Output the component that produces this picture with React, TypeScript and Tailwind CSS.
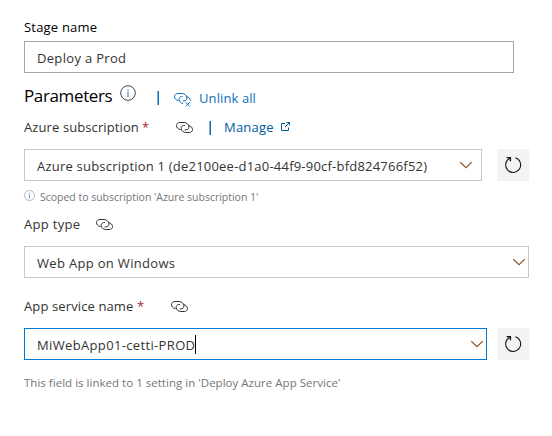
import React from 'react';

function LinkIcon({ className = '', unlink = false }: { className?: string; unlink?: boolean }) {
  return (
    <svg className={className} width="17" height="14" viewBox="0 0 17 14" fill="none" stroke="currentColor" strokeWidth="1">
      <path d="M4.6 7.5H4C2 7 .5 5.6 .5 3.6C.5 1.6 2 .5 4 .5H8C10.6 .5 13 2.6 13 5C13 6.9 11.6 7.9 9.8 7.9H8.6" />
      {unlink ? (
        <>
          <path d="M8.6 3.5H7.6C5.9 3.7 4.9 4.9 5.1 6.6C5.3 8.8 6.8 10.3 9 10.5M12.4 3.5C14.6 3.9 16.3 5.4 16.4 7.5" />
          <path d="M11.6 9.2L15.8 13.4M15.8 9.2L11.6 13.4" />
        </>
      ) : (
        <path d="M9 3.5H7.8C6 3.7 5 4.9 5.2 6.6C5.4 9 7.4 10.5 9.8 10.5H13.2C15.2 10.5 16.5 9.4 16.5 7.7C16.5 5.5 14.8 3.9 12.6 3.5" />
      )}
    </svg>
  );
}

function InfoIcon({ size, className = '' }: { size: number; className?: string }) {
  return (
    <svg className={className} width={size} height={size} viewBox="0 0 16 16" fill="none" stroke="currentColor">
      <circle cx="8" cy="8" r="7.3" />
      <path d="M8 6.8V12M8 4.2V5.4" stroke="#3f7fc0" strokeWidth="1.2" />
    </svg>
  );
}

function Chevron({ className = '' }: { className?: string }) {
  return (
    <svg className={className} width="13" height="8" viewBox="0 0 13 8" fill="none" stroke="currentColor" strokeWidth="1.2">
      <path d="M1.3 1.2L7 6.6L12.7 1.2" />
    </svg>
  );
}

function RefreshButton() {
  return (
    <button className="flex size-8 items-center justify-center bg-[#f3f3f3] text-[#15151f]">
      <svg width="18" height="18" viewBox="0 0 18 18" fill="none" stroke="currentColor" strokeWidth="1.1">
        <path d="M11.4 1.8A7.5 7.5 0 1 1 5.9 2.2" />
        <path d="M2.6 1.6H6.4V5.2" strokeWidth="1.4" />
      </svg>
    </button>
  );
}

export default function App() {
  return (
    <div className="h-[436px] w-[552px] bg-white pt-[17px] pl-6 font-['Open_Sans',sans-serif] text-[13px] leading-5 whitespace-nowrap text-[#333]">
      <div className="text-black"><span className="tracking-[0.2px]">Stage name</span></div>
      <div className="mt-1 flex h-8 w-[490px] items-center border border-[#a6a6a6] pt-0.5 pl-3">
        <span className="tracking-[0.32px]">Deploy a Prod</span>
      </div>

      <div className="mt-[9px] flex h-[27px] items-start">
        <h2 className="w-24 text-[17px] leading-[27px] text-black"><span className="tracking-[-0.37px]">Parameters</span></h2>
        <InfoIcon size={16} className="mt-[3px] text-[#444]" />
        <span className="mt-[9px] ml-[21px] h-[14px] w-0.5 bg-linear-to-r from-[#7fb0dd] from-50% to-[#106ebe] to-50%" />
        <LinkIcon unlink className="mt-[11px] ml-[15px] text-[#106ebe]" />
        <span className="mt-[6px] ml-2 tracking-[0.1px] text-[#106ebe]">Unlink all</span>
      </div>

      <div className="mt-2 flex h-5 items-start">
        <span className="w-[118px] tracking-[0.1px]">Azure subscription</span>
        <span className="w-[34px] text-[#a4262c]">*</span>
        <LinkIcon className="mt-[5px]" />
        <span className="mt-1 ml-4 h-[14px] w-0.5 bg-linear-to-r from-[#7fb0dd] from-50% to-[#106ebe] to-50%" />
        <span className="ml-[13px] w-[57px] tracking-[0.2px] text-[#005a9e]">Manage</span>
        <svg className="mt-[5px] text-[#005a9e]" width="10" height="10" viewBox="0 0 10 10" fill="none" stroke="currentColor">
          <path d="M4 1.5H.5V8.5H7.5V5.5M5.5 .5H8.5V3.5M8.5 .5L4 5" />
        </svg>
      </div>
      <div className="mt-3 flex gap-[15px]">
        <div className="flex h-8 w-[458px] items-center justify-between border border-[#c8c8c8] pr-[9px] pl-3">
          <span className="pt-0.5 tracking-[0.215px]">Azure subscription 1 (de2100ee-d1a0-44f9-90cf-bfd824766f52)</span>
          <Chevron className="text-[#8a5a32]" />
        </div>
        <RefreshButton />
      </div>
      <div className="mt-2 flex h-4 items-start text-[10.5px] leading-4 text-[#767676]">
        <InfoIcon size={11} className="mt-px mr-[5px] text-[#999]" />
        <span className="tracking-[-0.02px]">Scoped to subscription 'Azure subscription 1'</span>
      </div>

      <div className="mt-[9px] flex h-5 items-start">
        <span className="w-[72px] tracking-[0.3px]">App type</span>
        <LinkIcon className="mt-[5px]" />
      </div>
      <div className="mt-3 flex h-8 w-[505px] items-center justify-between border border-[#c8c8c8] pr-[3px] pl-3">
        <span className="pt-0.5 tracking-[0.32px]">Web App on Windows</span>
        <Chevron className="text-[#8a5a32]" />
      </div>

      <div className="mt-[18px] flex h-5 items-start">
        <span className="w-[113px] tracking-[0.12px]">App service name</span>
        <span className="w-[34px] text-[#a4262c]">*</span>
        <LinkIcon className="mt-[5px]" />
      </div>
      <div className="mt-3 flex gap-[10px]">
        <div className="flex h-8 w-[463px] items-center border border-[#0078d4] pr-[3px] pl-3">
          <span className="w-[158px] pt-0.5 tracking-[0.35px]">MiWebApp01-cetti-PROD</span>
          <span className="h-[19px] w-px bg-black" />
          <Chevron className="ml-auto text-[#8a5a32]" />
        </div>
        <RefreshButton />
      </div>
      <div className="mt-[15px] text-[11.5px] leading-4 text-[#767676]">
        <span className="tracking-[0.02px]">This field is linked to 1 setting in 'Deploy Azure App Service'</span>
      </div>
    </div>
  );
}
